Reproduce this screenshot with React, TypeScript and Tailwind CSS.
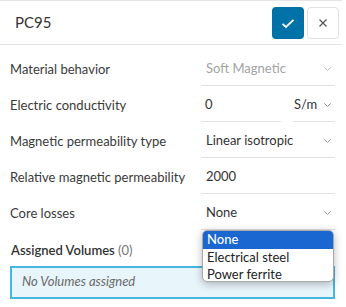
import React from "react";

const Chevron = ({ className = "" }: { className?: string }) => (
  <svg width="9" height="6" viewBox="0 0 9 6" className={className} fill="none">
    <path d="M1.2 1.3 L4.5 4.5 L7.8 1.3" stroke="currentColor" strokeWidth="0.9" />
  </svg>
);

function Row({ label, children }: { label: string; children: React.ReactNode }) {
  return (
    <div className="flex h-[36px] pt-[3px]">
      <div className="w-[201px] shrink-0 pl-[10px] flex items-center text-[13px] text-[#3a3a3a] whitespace-nowrap">{label}</div>
      <div className="flex w-[134px] shrink-0">{children}</div>
    </div>
  );
}

export default function App() {
  return (
    <div
      className="relative w-[346px] h-[307px] bg-white overflow-hidden"
      style={{ fontFamily: "Lato, 'Open Sans', sans-serif" }}
    >
      <div className="w-[342px]">
        <div className="h-[45px] border-t border-b border-[#e4e4e4] flex items-center justify-between pl-[15px] pr-[3px]">
          <span className="text-[15px] text-[#333]">PC95</span>
          <div className="flex gap-[3px] pt-[1px]">
            <button className="w-[32px] h-[32px] rounded-[4px] bg-[#0072a7] flex items-center justify-center">
              <svg width="14" height="11" viewBox="0 0 14 11" fill="none">
                <path d="M1.5 5.8 L5 9 L12.5 1.8" stroke="white" strokeWidth="1.8" />
              </svg>
            </button>
            <button className="w-[32px] h-[32px] rounded-[4px] bg-white border border-[#e0e0e0] flex items-center justify-center">
              <svg width="10" height="10" viewBox="0 0 10 10" fill="none">
                <path d="M1.5 1.5 L8.5 8.5 M8.5 1.5 L1.5 8.5" stroke="#555" strokeWidth="1.2" />
              </svg>
            </button>
          </div>
        </div>

        <div className="pt-[5px]">
          <Row label="Material behavior">
            <div className="flex-1 flex items-center justify-between border-b border-[#e2e2e2] pl-[5px] pr-[3px] text-[13px] text-[#a3a3a3]">
              <span>Soft Magnetic</span>
              <Chevron className="text-[#b8b8b8]" />
            </div>
          </Row>
          <Row label="Electric conductivity">
            <div className="w-[80px] flex items-center border-b border-[#e2e2e2] pl-[4px] text-[13px] text-[#333]">
              <span>0</span>
            </div>
            <div className="ml-[12px] flex-1 flex items-center justify-between border-b border-[#e2e2e2] pl-[1px] pr-[3px] text-[13px] text-[#333]">
              <span>S/m</span>
              <Chevron className="text-[#8a8a8a]" />
            </div>
          </Row>
          <Row label="Magnetic permeability type">
            <div className="flex-1 flex items-center justify-between border-b border-[#e2e2e2] pl-[5px] pr-[3px] text-[13px] text-[#333]">
              <span>Linear isotropic</span>
              <Chevron className="text-[#8a8a8a]" />
            </div>
          </Row>
          <Row label="Relative magnetic permeability">
            <div className="flex-1 flex items-center border-b border-[#e2e2e2] pl-[5px] text-[13px] text-[#333]">
              <span>2000</span>
            </div>
          </Row>
          <Row label="Core losses">
            <div className="flex-1 flex items-center justify-between border-b border-[#e2e2e2] pl-[5px] pr-[3px] text-[13px] text-[#333]">
              <span>None</span>
              <Chevron className="text-[#8a8a8a]" />
            </div>
          </Row>
        </div>

        <div className="pl-[11px] pt-[11px] text-[13px] text-[#333]">
          <span className="font-semibold">Assigned Volumes</span>{" "}
          <span className="text-[#777]">(0)</span>
        </div>
        <div className="ml-[10px] mt-[5px] w-[325px] h-[33px] border-2 border-[#45b6de] bg-[#e8f5fb] flex items-center pl-[10px] text-[13px] italic text-[#6a6a6a]">
          No Volumes assigned
        </div>
      </div>

      <div className="absolute left-[202px] top-[230px] w-[132px] h-[52px] rounded-[5px] border border-[#a9a9a9] bg-white overflow-hidden shadow-[0_2px_8px_rgba(0,0,0,0.28)] text-[13px] leading-[17px] text-[#222]">
        <div className="h-[18px] bg-[#1a67d2] text-white font-medium pl-[4px]">None</div>
        <div className="h-[17px] pl-[4px]">Electrical steel</div>
        <div className="h-[17px] pl-[4px]">Power ferrite</div>
      </div>
    </div>
  );
}
